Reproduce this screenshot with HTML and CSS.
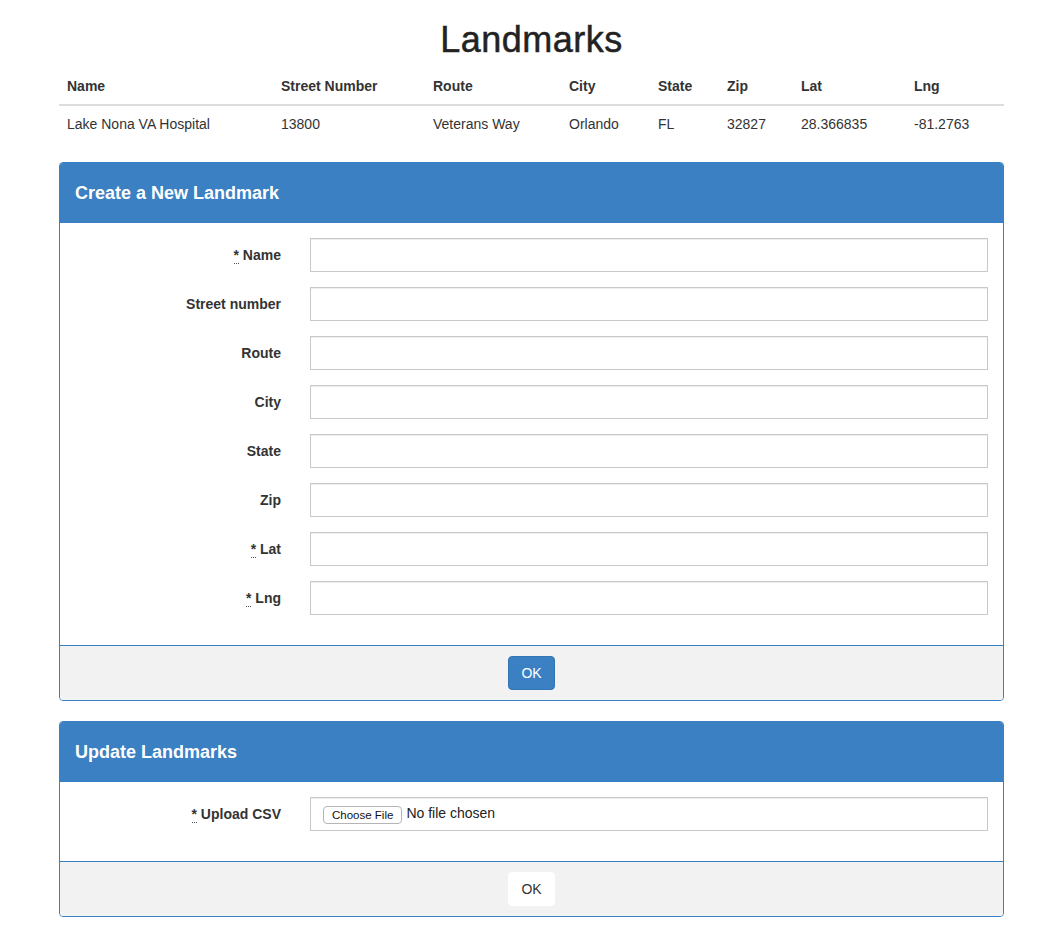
FILE: index.html
```html
<!DOCTYPE html>
<html lang="en">
<head>
<meta charset="utf-8">
<title>Landmarks</title>
<link rel="stylesheet" href="styles.css">
</head>
<body>
<div class="container">
  <h1 class="page-title">Landmarks</h1>
  <table class="table">
    <thead>
      <tr>
        <th class="c-name">Name</th>
        <th class="c-street">Street Number</th>
        <th class="c-route">Route</th>
        <th class="c-city">City</th>
        <th class="c-state">State</th>
        <th class="c-zip">Zip</th>
        <th class="c-lat">Lat</th>
        <th class="c-lng">Lng</th>
      </tr>
    </thead>
    <tbody>
      <tr>
        <td>Lake Nona VA Hospital</td>
        <td>13800</td>
        <td>Veterans Way</td>
        <td>Orlando</td>
        <td>FL</td>
        <td>32827</td>
        <td>28.366835</td>
        <td>-81.2763</td>
      </tr>
    </tbody>
  </table>

  <section class="panel">
    <div class="panel-heading"><h3 class="panel-title">Create a New Landmark</h3></div>
    <div class="panel-body">
      <div class="form-group"><label class="control-label"><abbr class="req" title="required">*</abbr> Name</label><input class="form-control" type="text"></div>
      <div class="form-group"><label class="control-label">Street number</label><input class="form-control" type="text"></div>
      <div class="form-group"><label class="control-label">Route</label><input class="form-control" type="text"></div>
      <div class="form-group"><label class="control-label">City</label><input class="form-control" type="text"></div>
      <div class="form-group"><label class="control-label">State</label><input class="form-control" type="text"></div>
      <div class="form-group"><label class="control-label">Zip</label><input class="form-control" type="text"></div>
      <div class="form-group"><label class="control-label"><abbr class="req" title="required">*</abbr> Lat</label><input class="form-control" type="text"></div>
      <div class="form-group"><label class="control-label"><abbr class="req" title="required">*</abbr> Lng</label><input class="form-control" type="text"></div>
    </div>
    <div class="panel-footer"><button class="btn btn-primary" type="button">OK</button></div>
  </section>

  <section class="panel">
    <div class="panel-heading"><h3 class="panel-title">Update Landmarks</h3></div>
    <div class="panel-body">
      <div class="form-group"><label class="control-label"><abbr class="req" title="required">*</abbr> Upload CSV</label>
        <div class="form-control file-control"><span class="file-btn">Choose File</span><span class="file-name">No file chosen</span></div>
      </div>
    </div>
    <div class="panel-footer"><button class="btn btn-default" type="button">OK</button></div>
  </section>
</div>
</body>
</html>
```

FILE: styles.css
```css
* { box-sizing: border-box; }
html, body { margin: 0; padding: 0; background: #fff; }
body {
  font-family: "Liberation Sans", Helvetica, Arial, sans-serif;
  font-size: 14px;
  line-height: 20px;
  color: #333;
}
.container {
  width: 945px;
  margin-left: 59px;
}
.page-title {
  margin: 20px 0 8px;
  font-size: 36px;
  font-weight: 500;
  line-height: 40px;
  letter-spacing: 0.5px;
  text-align: center;
  color: #222;
  -webkit-text-stroke: 0.5px #222;
}
.table {
  width: 100%;
  border-collapse: collapse;
  margin-bottom: 20px;
}
.table th, .table td {
  padding: 8px;
  text-align: left;
  vertical-align: top;
}
.table th {
  font-weight: bold;
  border-bottom: 2px solid #ddd;
}
.c-name { width: 214px; }
.c-street { width: 152px; }
.c-route { width: 136px; }
.c-city { width: 89px; }
.c-state { width: 69px; }
.c-zip { width: 74px; }
.c-lat { width: 113px; }
.c-lng { width: 98px; }

.panel {
  border: 1px solid #3a80c2;
  border-radius: 4px;
  margin-bottom: 20px;
  background: #fff;
  overflow: hidden;
}
.panel-heading {
  background: #3a80c2;
  color: #fff;
  padding: 10px 15px;
}
.panel-title {
  margin: 10px 0;
  font-size: 18px;
  font-weight: bold;
  line-height: 20px;
}
.panel-body {
  padding: 15px;
}
.form-group {
  display: grid;
  grid-template-columns: 206px 1fr;
  column-gap: 29px;
  margin-bottom: 15px;
}
.control-label {
  text-align: right;
  font-weight: bold;
  padding-top: 7px;
}
.req {
  text-decoration: none;
  border-bottom: 1px dotted #555;
}
.form-control {
  display: block;
  width: 100%;
  height: 34px;
  padding: 6px 12px;
  font: inherit;
  color: #555;
  background: #fff;
  border: 1px solid #c9c9c9;
  border-radius: 0;
  box-shadow: inset 0 1px 1px rgba(0, 0, 0, 0.075);
}
.file-control {
  display: flex;
  align-items: center;
  padding-top: 3px;
  color: #222;
}
.file-btn {
  display: inline-block;
  height: 18px;
  padding: 0 8px;
  font-size: 11.5px;
  line-height: 16px;
  color: #111;
  background: #fff;
  border: 1px solid #b5b5b5;
  border-radius: 4px;
  margin-top: 4px;
}
.file-name {
  margin-left: 4px;
  line-height: 20px;
}
.panel-footer {
  background: #f2f2f2;
  border-top: 1px solid #3a80c2;
  padding: 10px 15px;
  text-align: center;
}
.btn {
  display: inline-block;
  padding: 6px 12px;
  font: inherit;
  font-size: 14px;
  line-height: 20px;
  border: 1px solid transparent;
  border-radius: 4px;
  cursor: pointer;
}
.btn-primary {
  background: #3a80c2;
  border-color: #3375b3;
  color: #fff;
}
.btn-default {
  background: #fff;
  border-color: #fff;
  color: #333;
}
```
